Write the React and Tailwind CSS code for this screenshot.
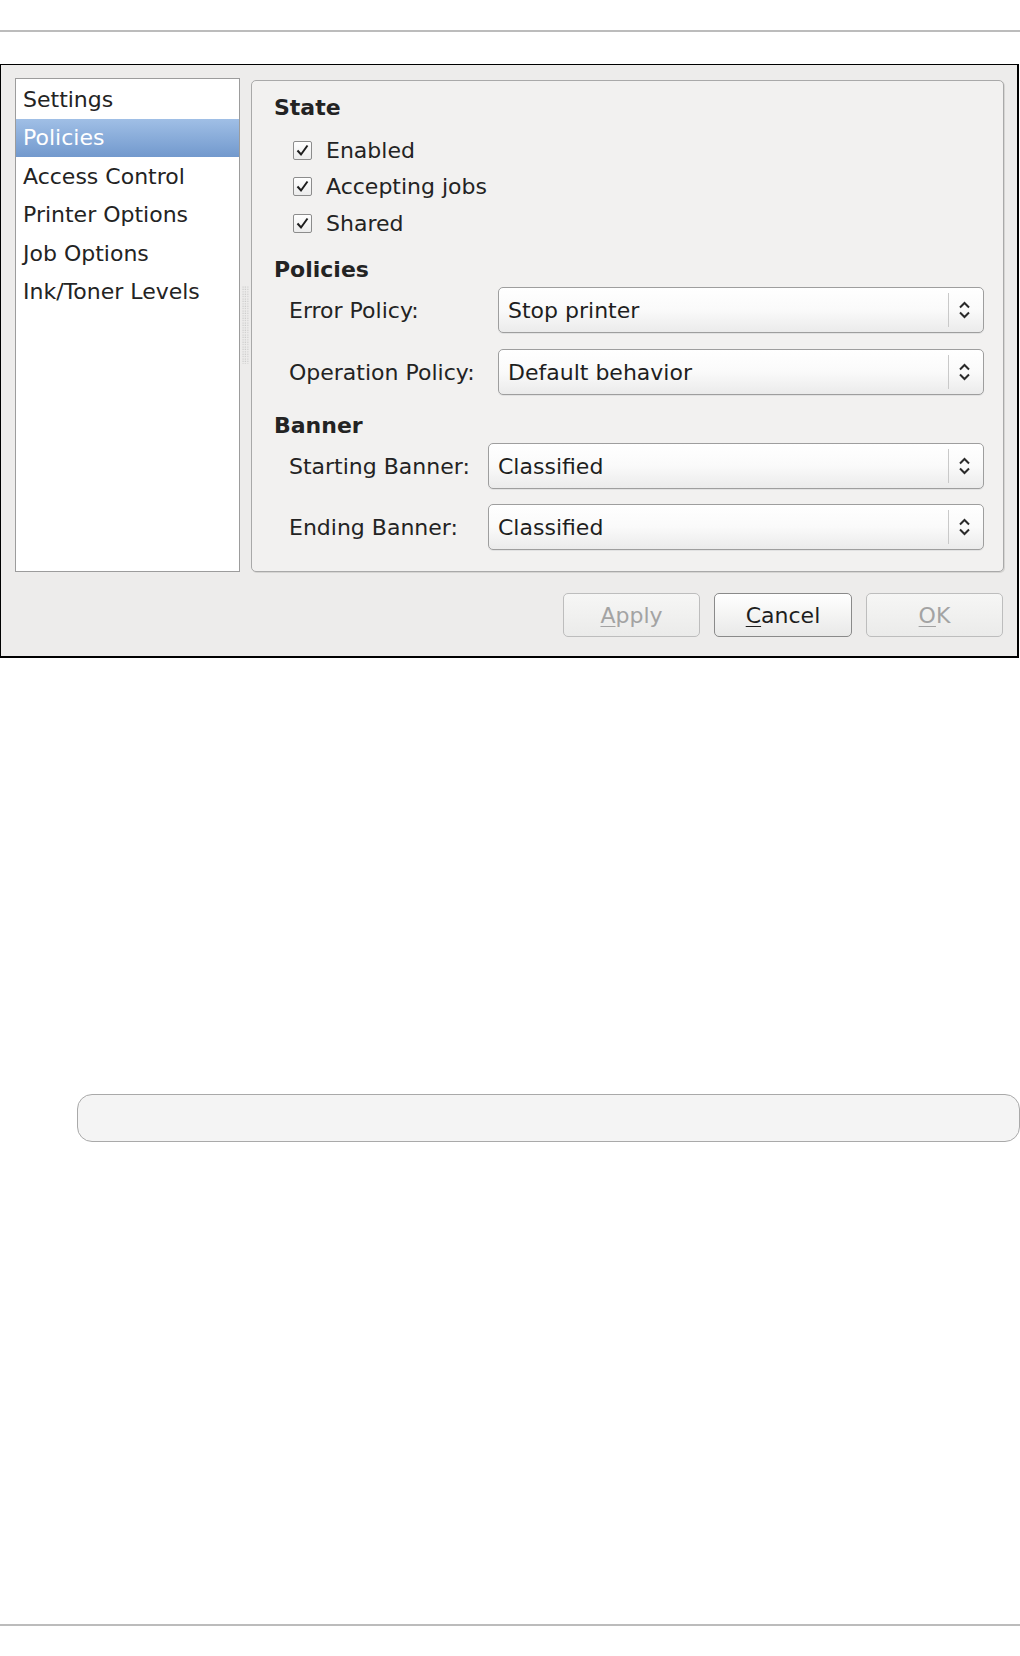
import React from "react";

const font = { fontFamily: '"DejaVu Sans", "Noto Sans", sans-serif' };

const navItems = [
  "Settings",
  "Policies",
  "Access Control",
  "Printer Options",
  "Job Options",
  "Ink/Toner Levels",
];

const CheckBox = () => (
  <span className="w-[19px] h-[19px] border border-[#8c8c8c] rounded-[2px] bg-gradient-to-b from-[#ffffff] to-[#ececec] flex items-center justify-center">
    <svg width="15" height="15" viewBox="0 0 15 15">
      <path d="M2.5 7.5 L6 11.5 L12.5 2.5" fill="none" stroke="#1e1e1e" strokeWidth="2" />
    </svg>
  </span>
);

const CheckRow = ({ label }) => (
  <div className="h-[36.5px] flex items-center gap-[14px] pl-[19px]">
    <CheckBox />
    <span>{label}</span>
  </div>
);

const Combo = ({ value }) => (
  <div className="h-[46px] flex-1 flex items-center rounded-[5px] border border-[#9e9e9e] bg-gradient-to-b from-[#ffffff] via-[#fafafa] to-[#ebebeb] shadow-[0_1px_0_#e2e2e2]">
    <span className="flex-1 pl-[9px] text-[#1e1e1e]">{value}</span>
    <span className="w-px h-[34px] bg-[#c9c9c9]" />
    <span className="w-[34px] flex items-center justify-center pr-[4px]">
      <svg width="13" height="20" viewBox="0 0 13 20">
        <path d="M2 7.5 L6.5 3 L11 7.5" fill="none" stroke="#2a2a2a" strokeWidth="2" />
        <path d="M2 12.5 L6.5 17 L11 12.5" fill="none" stroke="#2a2a2a" strokeWidth="2" />
      </svg>
    </span>
  </div>
);

const FieldRow = ({ label, value, labelWidth }) => (
  <div className="flex items-center">
    <span className={labelWidth}>{label}</span>
    <Combo value={value} />
  </div>
);

const Button = ({ letter, rest, disabled }) => (
  <button
    className={
      disabled
        ? "w-[137px] h-[44px] rounded-[5px] border border-[#bdbdbd] bg-gradient-to-b from-[#f6f6f5] to-[#ebebea] text-[#a3a3a3]"
        : "w-[138px] h-[44px] rounded-[5px] border border-[#8a8a8a] bg-gradient-to-b from-[#ffffff] to-[#e9e9e8] text-[#1e1e1e]"
    }
  >
    <span className="underline underline-offset-[3px] decoration-1">{letter}</span>
    {rest}
  </button>
);

export default function App() {
  return (
    <div className="w-[1020px] h-[1656px] bg-white text-[22px] text-[#232323]" style={font}>
      <div className="pt-[30px]">
        <div className="h-[2px] bg-[#bcbcbc]" />
      </div>

      <div className="mt-[32px] w-[1019px] h-[594px] border-t border-l border-r-2 border-b-2 border-black bg-[#edeceb] pt-[13px] pl-[14px] pr-[13px]">
        <div className="flex h-[494px]">
          <div className="w-[225px] h-[494px] border border-[#9c9c9c] bg-white pt-[1px]">
            {navItems.map((item, i) => (
              <div
                key={item}
                className={
                  i === 1
                    ? "h-[38.5px] flex items-center pl-[7px] text-white bg-gradient-to-b from-[#a0bfe6] to-[#7299cd]"
                    : "h-[38.5px] flex items-center pl-[7px]"
                }
              >
                {item}
              </div>
            ))}
          </div>

          <div className="w-[11px] flex items-center justify-center">
            <svg width="7" height="78" viewBox="0 0 7 78">
              <defs>
                <pattern id="grip" width="2.4" height="2.4" patternUnits="userSpaceOnUse">
                  <rect x="0.5" y="0.5" width="1" height="1" fill="#bdbdbd" />
                </pattern>
              </defs>
              <rect width="7" height="78" fill="url(#grip)" />
            </svg>
          </div>

          <div className="flex-1 mt-[2px] h-[492px] rounded-[5px] border border-[#a9a9a9] bg-[#f2f1f0] shadow-[1px_1px_0_#d6d5d3] pl-[22px] pr-[19px] pt-[12px]">
            <div className="h-[30px] leading-[30px] font-bold">State</div>
            <div className="mt-[9px]">
              <CheckRow label="Enabled" />
              <CheckRow label="Accepting jobs" />
              <CheckRow label="Shared" />
            </div>

            <div className="mt-[13.5px] h-[30px] leading-[30px] font-bold">Policies</div>
            <div className="mt-[2px] pl-[15px] flex flex-col gap-[16px]">
              <FieldRow label="Error Policy:" value="Stop printer" labelWidth="w-[209px]" />
              <FieldRow label="Operation Policy:" value="Default behavior" labelWidth="w-[209px]" />
            </div>

            <div className="mt-[16px] h-[30px] leading-[30px] font-bold">Banner</div>
            <div className="mt-[2px] pl-[15px] flex flex-col gap-[15px]">
              <FieldRow label="Starting Banner:" value="Classified" labelWidth="w-[199px]" />
              <FieldRow label="Ending Banner:" value="Classified" labelWidth="w-[199px]" />
            </div>
          </div>
        </div>

        <div className="mt-[21px] flex justify-end gap-[14px] pr-[1px]">
          <Button letter="A" rest="pply" disabled />
          <Button letter="C" rest="ancel" />
          <Button letter="O" rest="K" disabled />
        </div>
      </div>

      <div className="mt-[436px] ml-[77px] w-[943px] h-[48px] rounded-[15px] border border-[#a9a9a9] bg-[#f4f4f4]" />

      <div className="mt-[482px] h-[2px] bg-[#bcbcbc]" />
    </div>
  );
}
